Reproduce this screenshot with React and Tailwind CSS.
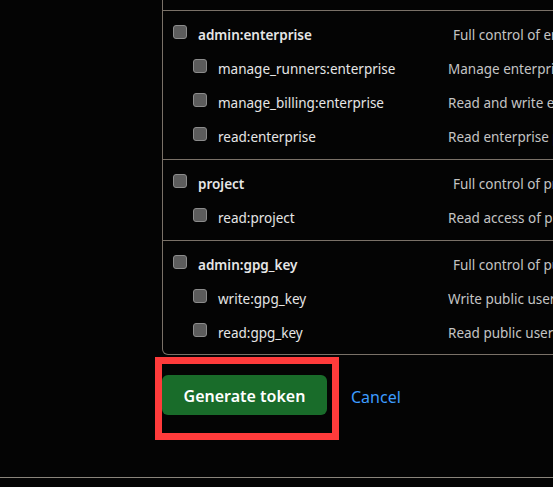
import React from "react";

const sections = [
  {
    name: "admin:enterprise",
    desc: "Full control of enterprises",
    children: [
      { name: "manage_runners:enterprise", desc: "Manage enterprise runners and runner groups" },
      { name: "manage_billing:enterprise", desc: "Read and write enterprise billing data" },
      { name: "read:enterprise", desc: "Read enterprise profile data" },
    ],
  },
  {
    name: "project",
    desc: "Full control of projects",
    children: [{ name: "read:project", desc: "Read access of projects" }],
  },
  {
    name: "admin:gpg_key",
    desc: "Full control of public user GPG keys",
    children: [
      { name: "write:gpg_key", desc: "Write public user GPG keys" },
      { name: "read:gpg_key", desc: "Read public user GPG keys" },
    ],
  },
];

function Box() {
  return (
    <span className="-mt-[6px] inline-block h-[14px] w-[14px] shrink-0 rounded-[3px] border border-[#8c8c8c] bg-[#5c5c5c]" />
  );
}

function Row({ item, top }) {
  return (
    <div className="flex h-[34px] items-center whitespace-nowrap">
      <div
        className={`flex shrink-0 items-center gap-[11px] ${top ? "w-[290px] pl-[10px]" : "w-[285px] pl-[30px]"}`}
      >
        <Box />
        <span className={`text-[13.5px] leading-[20px] text-[#e6e6e6] ${top ? "font-semibold" : ""}`}>
          {item.name}
        </span>
      </div>
      <span className="text-[13.5px] leading-[20px] text-[#c4c4c4]">{item.desc}</span>
    </div>
  );
}

export default function App() {
  return (
    <div
      className="relative h-[487px] w-[553px] overflow-hidden bg-[#040404]"
      style={{ fontFamily: '"Noto Sans", "Open Sans", sans-serif' }}
    >
      <div className="ml-[162px] w-[520px] rounded-b-[6px] border-x border-b border-[#7a7168] pt-[10px]">
        {sections.map((s, i) => (
          <div
            key={s.name}
            className={`border-t border-[#7a7168] pt-[7px] ${i === sections.length - 1 ? "pb-[4px]" : "pb-[5px]"}`}
          >
            <Row item={s} top />
            {s.children.map((c) => (
              <Row key={c.name} item={c} />
            ))}
          </div>
        ))}
      </div>

      <div className="ml-[162px] mt-[20px] flex h-[40px] items-center gap-[24px]">
        <button className="block h-[40px] w-[165px] rounded-[6px] bg-[#196c2a] pt-[2px] text-[16px] leading-[38px] font-semibold text-white">
          Generate token
        </button>
        <span className="pt-[3px] text-[16px] text-[#3d9cff]">Cancel</span>
      </div>

      <div className="pointer-events-none absolute left-[155px] top-[357px] h-[83px] w-[184px] border-[7px] border-[#ff3b3b]" />

      <div className="absolute left-0 right-0 top-[477px] h-px bg-[#8a857c]" />
    </div>
  );
}
